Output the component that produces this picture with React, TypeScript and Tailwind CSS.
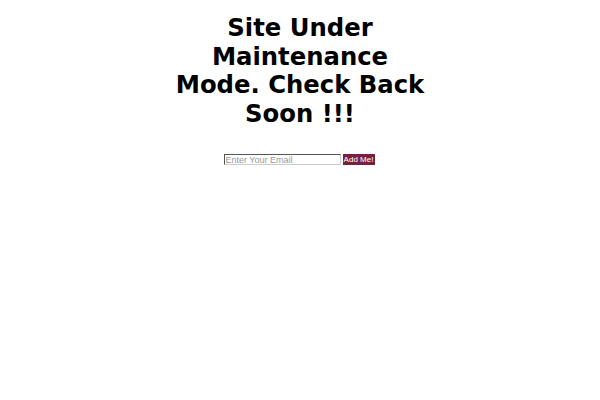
export default function App() {
  return (
    <div className="min-h-[400px] bg-white pt-[14px] font-['DejaVu_Sans',sans-serif]">
      <h1 className="mx-auto w-[252px] text-center text-[24.3px] font-bold leading-[28.5px] text-black">
        Site Under Maintenance Mode. Check Back Soon !!!
      </h1>
      <form className="mt-[26px] flex items-center justify-center gap-[2px] pr-[2px]" onSubmit={(e) => e.preventDefault()}>
        <input
          type="email"
          placeholder="Enter Your Email"
          className="h-[11px] w-[117px] border border-t-[#555] border-l-[#555] border-r-[#ccc] border-b-[#ccc] bg-white px-[1px] font-['Liberation_Sans',sans-serif] text-[9px] leading-none text-black placeholder:text-[#999] outline-none"
        />
        <button
          type="submit"
          className="h-[11px] w-[32px] bg-[#7b1f42] font-['Liberation_Sans',sans-serif] text-[8px] leading-none text-white"
        >
          Add Me!
        </button>
      </form>
    </div>
  );
}
